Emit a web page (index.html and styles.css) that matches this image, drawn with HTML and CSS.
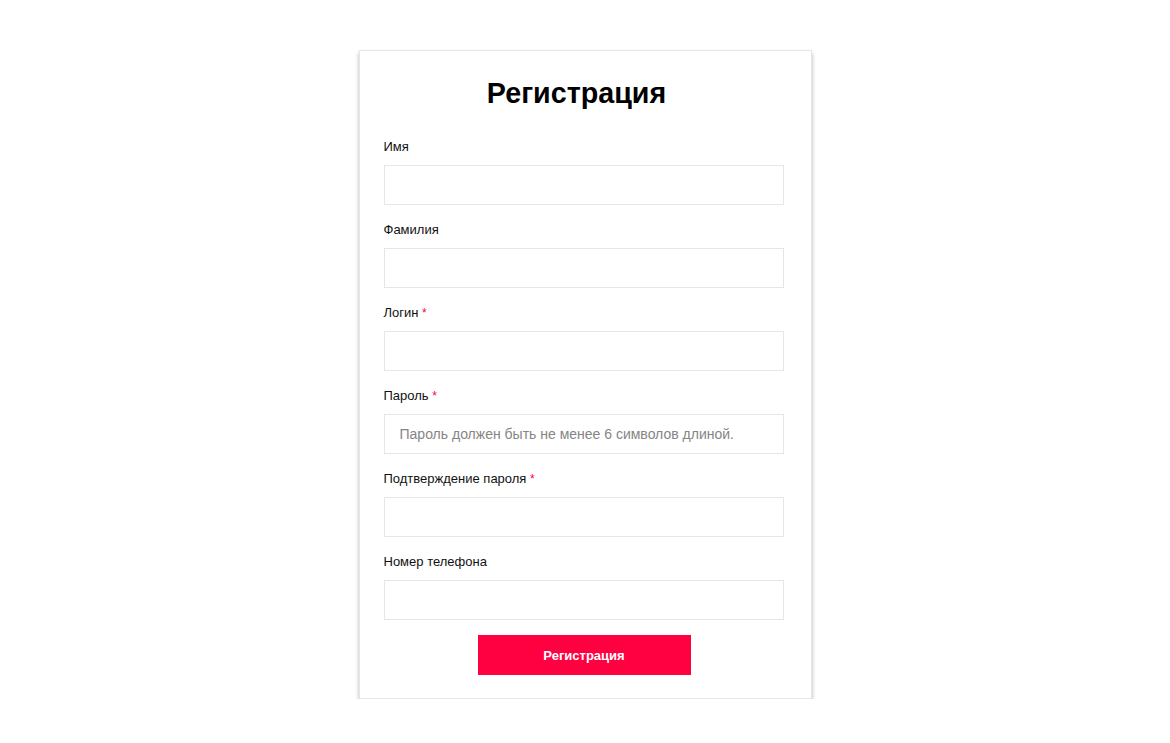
FILE: index.html
```html
<!DOCTYPE html>
<html>
<head>
<meta charset="utf-8" />
<title>Регистрация</title>
<link rel="stylesheet" href="styles.css">
</head>
<body>
<div class="page">
  <form class="card">
    <h1>Регистрация</h1>
    <div class="field">
      <label>Имя</label>
      <input type="text" />
    </div>
    <div class="field">
      <label>Фамилия</label>
      <input type="text" />
    </div>
    <div class="field">
      <label>Логин <span class="req">*</span></label>
      <input type="text" />
    </div>
    <div class="field">
      <label>Пароль <span class="req">*</span></label>
      <input type="password" placeholder="Пароль должен быть не менее 6 символов длиной." />
    </div>
    <div class="field">
      <label>Подтверждение пароля <span class="req">*</span></label>
      <input type="password" />
    </div>
    <div class="field">
      <label>Номер телефона</label>
      <input type="text" />
    </div>
    <div class="actions">
      <button type="button">Регистрация</button>
    </div>
  </form>
</div>
</body>
</html>
```

FILE: styles.css
```css
* {
  box-sizing: border-box;
  font-family: 'Liberation Sans', Arial, sans-serif;
}
html, body {
  margin: 0;
  background: #fff;
}
.page {
  display: flex;
  justify-content: center;
  padding-top: 50px;
}
.card {
  width: 453px;
  padding: 26px 27px 23px 24px;
  border: 1px solid #e6e6e6;
  background: #fff;
  box-shadow: 0 3px 4px rgba(0, 0, 0, .3);
}
h1 {
  margin: 0 0 28px;
  padding-right: 14px;
  text-align: center;
  font-size: 28.7px;
  line-height: 32px;
  font-weight: bold;
  color: #000;
}
.field {
  display: flex;
  flex-direction: column;
  margin-bottom: 15px;
}
.field > label {
  font-size: 13px;
  line-height: 18px;
  padding-top: 1px;
  margin-bottom: 9px;
  color: #111;
}
.req {
  color: #ff0040;
  font-size: 12px;
}
.field > input {
  height: 40px;
  width: 400px;
  border: 1px solid #e6e6e6;
  padding: 0 15px;
  font-size: 14px;
  outline: none;
}
.field > input::placeholder {
  color: #858585;
}
.actions {
  display: flex;
  justify-content: center;
  padding-left: 1px;
}
.actions > button {
  width: 213px;
  height: 40px;
  border: none;
  background: #ff0040;
  color: #fff;
  font-size: 13px;
  font-weight: bold;
  cursor: pointer;
}
```
